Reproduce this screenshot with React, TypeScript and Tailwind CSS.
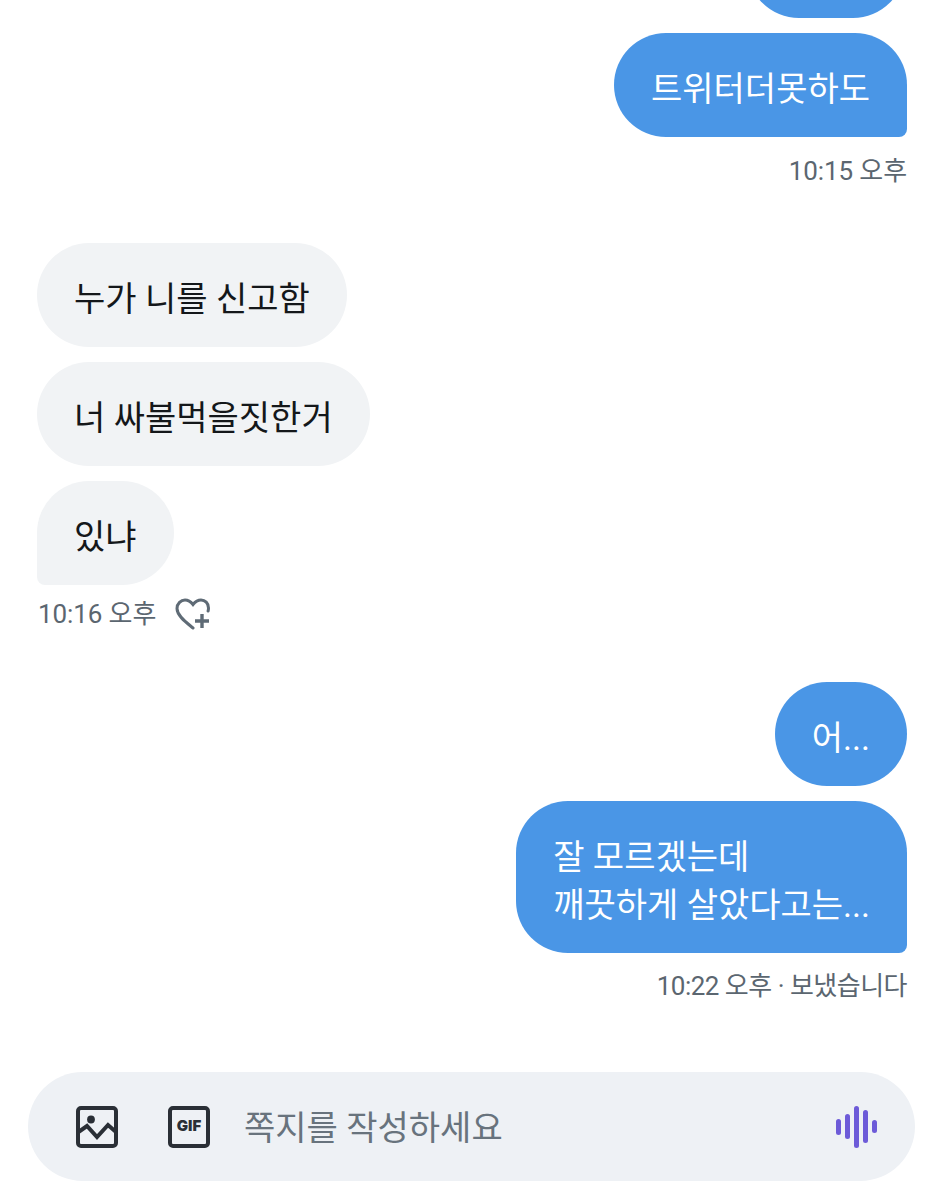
import React from "react";

const font = { fontFamily: '"Roboto", "Noto Sans CJK KR", sans-serif' };

function Mine({ children, className = "" }: { children: React.ReactNode; className?: string }) {
  return (
    <div className={"self-end bg-[#4a96e6] text-white text-[34px] leading-[48px] font-normal rounded-[52px] px-[37px] pt-[32px] pb-[24px] " + className}>
      {children}
    </div>
  );
}

function Theirs({ children, className = "" }: { children: React.ReactNode; className?: string }) {
  return (
    <div className={"self-start bg-[#f1f3f5] text-[#14171a] text-[34px] leading-[48px] rounded-[52px] px-[37px] pt-[32px] pb-[24px] " + className}>
      {children}
    </div>
  );
}

function ImageIcon() {
  return (
    <svg width="42" height="42" viewBox="0 0 42 42" fill="none" stroke="#2a2f36" strokeWidth="4">
      <rect x="2" y="2" width="38" height="38" rx="3" />
      <circle cx="15" cy="13.500" r="3.900" fill="#2a2f36" stroke="none" />
      <path d="M1 27l10-7 10 11 11-12 8 7" />
    </svg>
  );
}

function GifIcon() {
  return (
    <div className="w-[42px] h-[42px] border-[4px] border-[#2a2f36] rounded-[5px] flex items-center justify-center text-[15px] font-black text-[#2a2f36]" style={{ fontFamily: 'Inter, sans-serif' }}>
      GIF
    </div>
  );
}

function HeartPlus() {
  return (
    <svg width="36" height="32" viewBox="0 0 36 32" fill="none" stroke="#5f6b76" strokeWidth="3">
      <path d="M18 30C12 25 2 18 2 10.500C2 5.500 6 2 10 2c3.500 0 6 2 8 4.500C20 4 22.500 2 26 2c4 0 7.500 3 7.500 8 0 1-.1 2-.4 3" strokeLinecap="round" />
      <path d="M27 16v14M20 23h14" strokeWidth="3.400" />
    </svg>
  );
}

function Wave() {
  const bars = [16, 25, 42, 33, 13];
  return (
    <div className="flex items-center gap-[4px]">
      {bars.map((h, i) => (
        <div key={i} className="w-[5px] rounded-full bg-[#6d5bd8]" style={{ height: h }} />
      ))}
    </div>
  );
}

export default function App() {
  const time = "text-[26px] leading-[40px] text-[#5b6670] font-normal";
  return (
    <div className="w-[944px] h-[1200px] bg-white overflow-hidden flex flex-col" style={font}>
      <div className="flex flex-col px-[37px] -mt-[86px]">
        <div className="self-end w-[158px] h-[104px] mr-[2px] bg-[#4a96e6] rounded-[52px]" />
        <Mine className="mt-[15px] rounded-br-[8px]">트위터더못하도</Mine>
        <div className={"self-end mt-[14px] tracking-[-0.1px] " + time}>10:15 오후</div>

        <Theirs className="mt-[52px]">누가 니를 신고함</Theirs>
        <Theirs className="mt-[15px]">너 싸불먹을짓한거</Theirs>
        <Theirs className="mt-[15px] rounded-bl-[8px]">있냐</Theirs>
        <div className="flex items-center mt-[9px] h-[40px] pl-[1px]">
          <span className={"tracking-[-0.1px] " + time}>10:16 오후</span>
          <span className="ml-[19px]"><HeartPlus /></span>
        </div>

        <Mine className="mt-[48px]">어...</Mine>
        <Mine className="mt-[15px] rounded-br-[8px]">
          잘 모르겠는데
          <br />
          깨끗하게 살았다고는...
        </Mine>
        <div className={"self-end mt-[13px] tracking-[-0.5px] " + time}>10:22 오후 · 보냈습니다</div>
      </div>

      <div className="mx-[28px] mt-[66px] w-[887px] h-[109px] rounded-[55px] bg-[#eef1f5] flex items-center pl-[48px] pr-[38px]">
        <ImageIcon />
        <div className="ml-[50px]"><GifIcon /></div>
        <span className="ml-[34px] text-[34px] leading-[48px] pt-[3px] text-[#68737d]">쪽지를 작성하세요</span>
        <div className="ml-auto"><Wave /></div>
      </div>
    </div>
  );
}
